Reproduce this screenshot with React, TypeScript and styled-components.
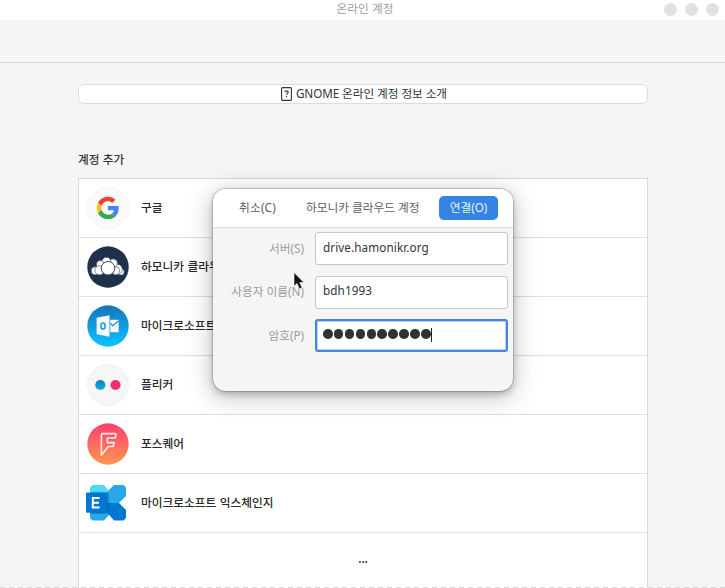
import React from 'react';
import styled, { createGlobalStyle } from 'styled-components';

const GlobalStyle = createGlobalStyle`
  * { box-sizing: border-box; }
  html, body { margin: 0; height: 100%; overflow: hidden; }
  body {
    font-family: "Noto Sans", "Noto Sans CJK KR", sans-serif;
    font-size: 11.7px;
    line-height: 16px;
    color: #333537;
    background: #f5f5f5;
  }
`;

const Window = styled.div`
  position: relative;
  width: 725px;
  height: 588px;
  overflow: hidden;
  display: flex;
  flex-direction: column;
  background: #f5f5f5;
`;

const TitleBar = styled.header`
  flex: none;
  height: 20px;
  display: grid;
  grid-template-columns: 1fr auto 1fr;
  padding: 0 6px 0 11px;
  background: #fff;
  color: #a0a0a0;
`;

const WindowTitle = styled.span`
  grid-column: 2;
  white-space: nowrap;
`;

const WindowControls = styled.div`
  display: flex;
  justify-content: flex-end;
  gap: 8px;
  padding-top: 3px;
`;

const ControlDot = styled.span`
  width: 13px;
  height: 13px;
  border-radius: 50%;
  background: #e1e1e1;
`;

const HeaderBar = styled.div`
  flex: none;
  height: 43px;
  border-bottom: 1px solid #d9d9d9;
`;

const Content = styled.main`
  flex: 1;
  min-height: 0;
  display: flex;
  flex-direction: column;
  margin: 0 77px 0 78px;
`;

const InfoButton = styled.button`
  flex: none;
  display: flex;
  align-items: center;
  justify-content: center;
  gap: 4px;
  height: 20px;
  margin: 21px 0 0;
  padding: 0 0 0 2px;
  border: 1px solid #dddddd;
  border-radius: 6px;
  background: #fff;
  color: #333537;
  font: inherit;
  letter-spacing: -0.08px;

  span { padding-bottom: 3px; }
`;

const SectionTitle = styled.h2`
  flex: none;
  margin: 47px 0 0;
  height: 27px;
  font-size: 11.7px;
  font-weight: 500;
  line-height: 16px;
  font-family: "Noto Sans CJK KR", sans-serif;
  word-spacing: 0.5px;
`;

const AccountList = styled.ul`
  flex: none;
  list-style: none;
  margin: 0;
  padding: 0;
  border: 1px solid #d9d9d9;
  background: #fff;
`;

const AccountRow = styled.li`
  display: flex;
  align-items: center;
  gap: 12px;
  height: 59px;
  padding-left: 8px;
  border-bottom: 1px solid #dfdfdf;
  font-family: "Noto Sans CJK KR", sans-serif;
  font-weight: 500;
  color: #28292c;

  svg { display: block; flex: none; }
`;

const AccountName = styled.span`
  padding-bottom: 2px;
  word-spacing: 0.8px;
`;

const MoreRow = styled.li`
  height: 60px;
  padding-top: 17px;
  text-align: center;
  font-weight: 600;
`;

const DashedEdge = styled.div`
  position: absolute;
  left: 0;
  right: 0;
  bottom: 0;
  height: 1px;
  background: repeating-linear-gradient(90deg, #d6d6d6 0 5px, transparent 5px 9px);
`;

const Dialog = styled.section`
  position: absolute;
  left: 213px;
  top: 189px;
  width: 300px;
  height: 202px;
  border-radius: 13px;
  background: #f5f5f5;
  overflow: hidden;
  box-shadow: 0 0 0 1px rgba(0, 0, 0, 0.16), 0 3px 7px rgba(0, 0, 0, 0.24), 0 5px 24px 3px rgba(0, 0, 0, 0.2);
`;

const DialogHeader = styled.div`
  display: grid;
  grid-template-columns: 67px 1fr 59px;
  align-items: center;
  height: 39px;
  padding: 0 15px 0 26px;
  border-bottom: 1px solid #dadada;
  background: #fff;
  color: #5f6163;
  white-space: nowrap;
`;

const DialogTitle = styled.span`
  padding-bottom: 2px;
`;

const ConnectButton = styled.button`
  width: 59px;
  height: 24px;
  padding: 0 0 2px;
  border: 0;
  border-radius: 5px;
  background: #3584e4;
  color: #e6f1ff;
  font: inherit;
`;

const CancelButton = styled.button`
  padding: 0 0 2px;
  border: 0;
  background: none;
  color: inherit;
  font: inherit;
  text-align: left;
  letter-spacing: 0.2px;
`;

const Form = styled.form`
  display: grid;
  grid-template-columns: 91px 193px;
  grid-template-rows: repeat(3, 33px);
  column-gap: 11px;
  row-gap: 10.6px;
  padding-top: 4px;
`;

const FieldLabel = styled.label`
  align-self: center;
  text-align: right;
  color: #9c9c9d;
  white-space: nowrap;
  padding-bottom: 2px;
`;

const Entry = styled.div<{ $focused?: boolean }>`
  display: flex;
  align-items: center;
  height: 33px;
  padding: ${p => (p.$focused ? '0 6px 3px' : '0 7px 4px')};
  border: ${p => (p.$focused ? '2px solid #4783e2' : '1px solid #c6c6c6')};
  border-radius: 3px;
  background: #fff;
  box-shadow: ${p => (p.$focused ? 'inset 0 0 0 1px #b5d5fb' : 'none')};
  letter-spacing: 0.1px;
`;

const Dots = styled.div`
  display: flex;
  gap: 1.3px;
`;

const Dot = styled.span`
  width: 9.6px;
  height: 9.6px;
  border-radius: 50%;
  background: #313234;
`;

const Caret = styled.span`
  width: 1px;
  height: 14px;
  margin-top: 1px;
  background: #222;
`;

const Pointer = styled.svg`
  position: absolute;
  left: 293px;
  top: 272px;
`;

const HelpIcon = () => (
  <svg width="11" height="14" viewBox="0 0 11 14" fill="none" stroke="#333537">
    <rect x="0.6" y="0.6" width="9.8" height="12.8" rx="1" strokeWidth="1.1" />
    <path d="M3.8 5.3c.1-1 .7-1.4 1.7-1.4 1.1 0 1.7.5 1.7 1.3C7.2 6.4 5.5 6.5 5.5 7.8M5.5 8.9v1.2" strokeWidth="1.2" />
  </svg>
);

const GoogleIcon = () => (
  <svg width="42" height="42" viewBox="0 0 42 42">
    <circle cx="21" cy="21" r="20.5" fill="#fafafa" stroke="#f0f0f0" strokeWidth=".7" />
    <g transform="translate(9.8 9.8) scale(.465)">
      <path fill="#EA4335" d="M24 9.5c3.54 0 6.71 1.22 9.21 3.6l6.85-6.85C35.9 2.38 30.47 0 24 0 14.62 0 6.51 5.38 2.56 13.22l7.98 6.19C12.43 13.72 17.74 9.5 24 9.5z" />
      <path fill="#4285F4" d="M46.98 24.55c0-1.57-.15-3.09-.38-4.55H24v9.02h12.94c-.58 2.96-2.26 5.48-4.78 7.18l7.73 6c4.51-4.18 7.09-10.36 7.09-17.65z" />
      <path fill="#FBBC05" d="M10.53 28.59c-.48-1.45-.76-2.99-.76-4.59s.27-3.14.76-4.59l-7.98-6.19C.92 16.46 0 20.12 0 24c0 3.88.92 7.54 2.56 10.78l7.97-6.19z" />
      <path fill="#34A853" d="M24 48c6.48 0 11.93-2.13 15.89-5.81l-7.73-6c-2.15 1.45-4.92 2.3-8.16 2.3-6.26 0-11.57-4.22-13.47-9.91l-7.98 6.19C6.51 42.62 14.62 48 24 48z" />
    </g>
  </svg>
);

const CloudIcon = () => (
  <svg width="42" height="42" viewBox="0 0 42 42">
    <circle cx="21" cy="21" r="20.7" fill="#1f304a" />
    <g fill="#fff" stroke="#3a4860" strokeWidth=".6">
      <circle cx="34" cy="25.9" r="3.2" />
      <circle cx="30.2" cy="23.4" r="5.2" />
      <circle cx="8.2" cy="24.8" r="4" />
      <circle cx="26.2" cy="17.2" r="4.2" />
      <circle cx="19.4" cy="15.9" r="4.6" />
      <circle cx="13.4" cy="18.4" r="3.9" />
      <circle cx="12.6" cy="24.3" r="4.7" />
      <circle cx="28.8" cy="24.8" r="4" />
      <circle cx="21" cy="22.2" r="6.8" strokeWidth="1" />
    </g>
  </svg>
);

const OutlookIcon = () => (
  <svg width="42" height="42" viewBox="0 0 42 42">
    <defs>
      <linearGradient id="outlook" x1="0" y1="0" x2="0" y2="1">
        <stop offset="0" stopColor="#1473bd" />
        <stop offset="1" stopColor="#0bc4ff" />
      </linearGradient>
    </defs>
    <circle cx="21" cy="21" r="20.7" fill="url(#outlook)" />
    <path d="M23.3 14.7h8.4v12.6h-8.4zM9.6 12.7l12.9-2.4v21.4L9.6 29.3z" fill="#f4f8ff" />
    <path d="M23.3 18.2l2.5 2.4 5.9-4.8" fill="none" stroke="#218fd1" strokeWidth="1.2" />
    <ellipse cx="16" cy="21" rx="2.1" ry="3.1" fill="none" stroke="#2496d8" strokeWidth="1.5" />
  </svg>
);

const FlickrIcon = () => (
  <svg width="42" height="42" viewBox="0 0 42 42">
    <defs>
      <linearGradient id="flickrBlue" x1="0" y1="0" x2="0" y2="1">
        <stop offset="0" stopColor="#137dbe" />
        <stop offset="1" stopColor="#0bb4e0" />
      </linearGradient>
    </defs>
    <circle cx="21" cy="21" r="20.5" fill="#f6f6f6" stroke="#ececec" strokeWidth=".7" />
    <circle cx="13.3" cy="21" r="5.1" fill="url(#flickrBlue)" />
    <circle cx="28.5" cy="21" r="5.1" fill="#f0306c" />
  </svg>
);

const FoursquareIcon = () => (
  <svg width="42" height="42" viewBox="0 0 42 42">
    <defs>
      <linearGradient id="foursquare" x1="0" y1="0" x2="0" y2="1">
        <stop offset="0" stopColor="#fc3f6e" />
        <stop offset="1" stopColor="#ff9651" />
      </linearGradient>
    </defs>
    <circle cx="21" cy="21" r="20.7" fill="url(#foursquare)" />
    <path
      d="M14.4 32.2V12q0-1.4 1.4-1.4h12q1.3 0 1.1 1.3l-.7 3.1h-7.8v4.6h6.8M27.2 19.6l-.7 2.7q-.2 1.2-1.4 1.2h-3.7l-7 8.7"
      fill="none"
      stroke="#ffe9e8"
      strokeWidth="1.6"
      strokeLinejoin="round"
      strokeLinecap="round"
    />
  </svg>
);

const ExchangeIcon = () => (
  <svg width="42" height="42" viewBox="0 0 42 42">
    <path d="M5.5 3H17l5 6v12H3V5.5z" fill="#50d9ff" />
    <path d="M3 21h19v12l-5 5.5H5.5L3 36z" fill="#28a8ea" />
    <path d="M27 3h9.5L39 5.5V14l-7 7H20.5V9.5z" fill="#28a8ea" />
    <path d="M20.5 21H32l7 7v8l-2.5 2.5H27L20.5 31z" fill="#0078d4" />
    <path d="M3 10.5h17.5l1.2 1.5v18l-2 1.8H3z" fill="#035b9e" opacity=".6" />
    <rect x="-1" y="10.5" width="21" height="20.2" rx="1.3" fill="#0075d2" />
    <path d="M12.6 15.9H5.8v9.7h6.8M6 20.7h6" fill="none" stroke="#fff" strokeWidth="2" />
  </svg>
);

const OverflowingIcon = styled.span`
  svg { overflow: visible; }
`;

const accounts: { name: string; icon: React.ReactNode }[] = [
  { name: '구글', icon: <GoogleIcon /> },
  { name: '하모니카 클라우드', icon: <CloudIcon /> },
  { name: '마이크로소프트', icon: <OutlookIcon /> },
  { name: '플리커', icon: <FlickrIcon /> },
  { name: '포스퀘어', icon: <FoursquareIcon /> },
  { name: '마이크로소프트 익스체인지', icon: <OverflowingIcon><ExchangeIcon /></OverflowingIcon> },
];

export default function App() {
  return (
    <>
      <GlobalStyle />
      <Window>
        <TitleBar>
          <WindowTitle>온라인 계정</WindowTitle>
          <WindowControls>
            <ControlDot />
            <ControlDot />
            <ControlDot />
          </WindowControls>
        </TitleBar>
        <HeaderBar />
        <Content>
          <InfoButton>
            <HelpIcon />
            <span>GNOME 온라인 계정 정보 소개</span>
          </InfoButton>
          <SectionTitle>계정 추가</SectionTitle>
          <AccountList>
            {accounts.map(({ name, icon }) => (
              <AccountRow key={name}>
                {icon}
                <AccountName>{name}</AccountName>
              </AccountRow>
            ))}
            <MoreRow>...</MoreRow>
          </AccountList>
        </Content>
        <DashedEdge />
        <Dialog>
          <DialogHeader>
            <CancelButton>취소(C)</CancelButton>
            <DialogTitle>하모니카 클라우드 계정</DialogTitle>
            <ConnectButton>연결(O)</ConnectButton>
          </DialogHeader>
          <Form>
            <FieldLabel>서버(S)</FieldLabel>
            <Entry>drive.hamonikr.org</Entry>
            <FieldLabel>사용자 이름(N)</FieldLabel>
            <Entry>bdh1993</Entry>
            <FieldLabel>암호(P)</FieldLabel>
            <Entry $focused>
              <Dots>
                {Array.from({ length: 10 }, (_, i) => (
                  <Dot key={i} />
                ))}
              </Dots>
              <Caret />
            </Entry>
          </Form>
        </Dialog>
        <Pointer width="14" height="18" viewBox="0 0 14 18">
          <path d="M1 0.5V14.2L4 11.6L6.4 16.8L9.1 15.6L6.7 10.6H11Z" fill="#111" stroke="#fff" strokeWidth=".6" />
        </Pointer>
      </Window>
    </>
  );
}
